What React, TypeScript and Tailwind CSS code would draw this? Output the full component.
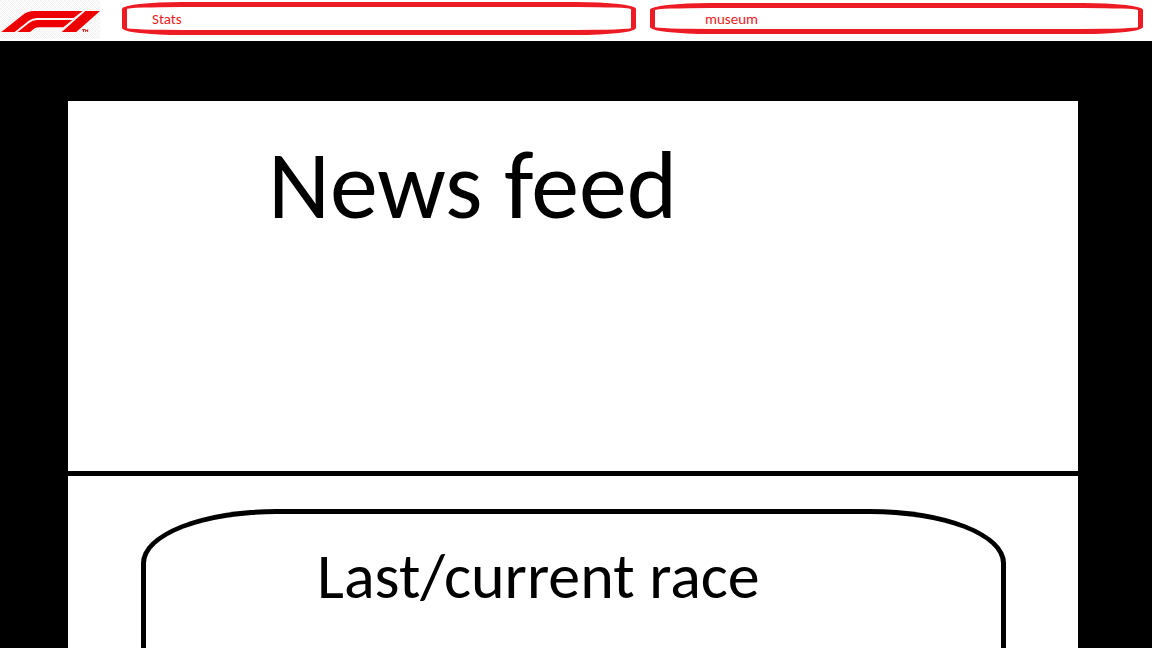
function Logo() {
  return (
    <svg viewBox="0 0 300 117" className="h-[39px] w-[100px] shrink-0" role="img" aria-label="F1">
      <defs>
        <pattern id="checks" width="12" height="12" patternUnits="userSpaceOnUse">
          <rect width="12" height="12" fill="#fdfdfd" />
          <path d="M0 0h3v3H0zM3 3h3v3H3zM9 3h3v3H9zM6 6h3v3H6zM3 9h3v3H3zM9 9h3v3H9z" fill="#f0f0f0" />
        </pattern>
      </defs>
      <rect width="300" height="117" fill="url(#checks)" />
      <g fill="#ee0000">
        <path d="M4 96 L69 44 Q83 33 102 33 H248 L221 54 H112 Q97 54 86 62 L44 96 Z" />
        <path d="M53 96 L88 68 Q98 60 112 60 H217 L190 82 H119 Q110 82 104 85 L90 96 Z" />
        <path d="M256 33 H300 L229 96 H185 Z" />
      </g>
      <path d="M246 89h9M250.500 89v7M257 96v-7l3 4 3-4v7" fill="none" stroke="#c22" strokeWidth="3" />
    </svg>
  );
}

export default function App() {
  return (
    <div className="flex min-h-screen flex-col bg-black font-['Carlito','Calibri','Lato',sans-serif] text-black">
      <header className="flex h-[41px] items-start bg-white pr-[9px]">
        <Logo />
        <nav className="ml-[22px] grid flex-1 grid-cols-[514fr_493fr] items-center gap-[14px] pt-[2px] text-[15px] leading-4 text-[#ed1c24]">
          <a
            href="#stats"
            className="flex h-[33px] items-center rounded-[60px/7px] border-5 border-[#ed1c24] pl-[25px]"
          >
            Stats
          </a>
          <a
            href="#museum"
            className="flex h-[31px] items-center rounded-[60px/7px] border-5 border-[#ed1c24] pl-[50px]"
          >
            museum
          </a>
        </nav>
      </header>
      <main className="flex flex-1 flex-col pt-[60px] pr-[74px] pl-[68px]">
        <section className="h-[370px] bg-white pt-[35px] pl-[200px]">
          <h1 className="text-[96px] leading-[100px]">News feed</h1>
        </section>
        <section className="mt-[5px] flex flex-1 flex-col bg-white pt-[33px] pr-[72px] pl-[73px]">
          <div className="flex-1 rounded-t-[136px_54px] border-5 border-b-0 border-black pt-[26px] pl-[171px]">
            <h2 className="text-[64px] leading-[72px]">Last/current race</h2>
          </div>
        </section>
      </main>
    </div>
  );
}
